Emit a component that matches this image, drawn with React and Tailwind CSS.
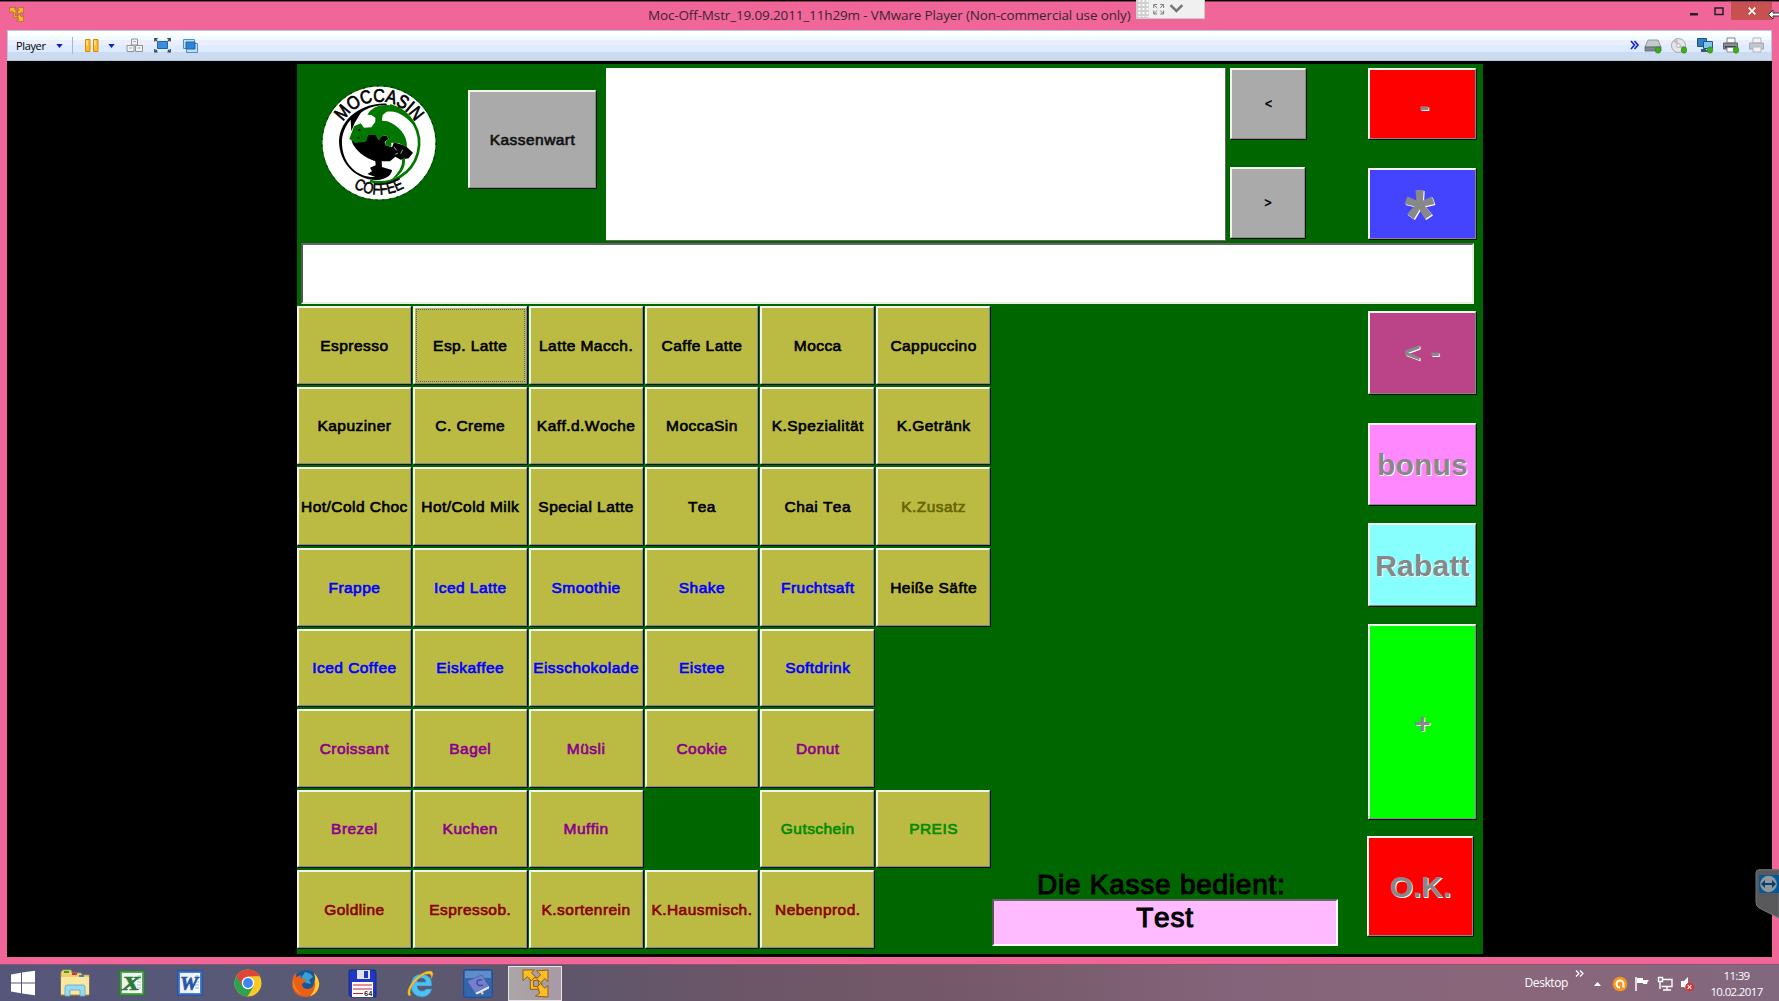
import React from "react";

const K = "text-black";
const B = "text-[#0000ff]";
const P = "text-[#8b008b]";
const G = "text-[#008a00]";
const R = "text-[#8b0000]";

const products = [
  ["Espresso", K], ["Esp. Latte", K, true], ["Latte Macch.", K], ["Caffe Latte", K], ["Mocca", K], ["Cappuccino", K],
  ["Kapuziner", K], ["C. Creme", K], ["Kaff.d.Woche", K], ["MoccaSin", K], ["K.Spezialität", K], ["K.Getränk", K],
  ["Hot/Cold Choc", K], ["Hot/Cold Milk", K], ["Special Latte", K], ["Tea", K], ["Chai Tea", K], ["K.Zusatz", "text-[#666600]"],
  ["Frappe", B], ["Iced Latte", B], ["Smoothie", B], ["Shake", B], ["Fruchtsaft", B], ["Heiße Säfte", K],
  ["Iced Coffee", B], ["Eiskaffee", B], ["Eisschokolade", B], ["Eistee", B], ["Softdrink", B], null,
  ["Croissant", P], ["Bagel", P], ["Müsli", P], ["Cookie", P], ["Donut", P], null,
  ["Brezel", P], ["Kuchen", P], ["Muffin", P], null, ["Gutschein", G], ["PREIS", G],
  ["Goldline", R], ["Espressob.", R], ["K.sortenrein", R], ["K.Hausmisch.", R], ["Nebenprod.", R], null,
];

const bevel =
  "flex items-center justify-center shrink-0 whitespace-nowrap border-t-2 border-l-2 border-r border-b border-t-[#f4f4ee] border-l-[#f4f4ee] border-r-[#888] border-b-[#888] shadow-[1px_1px_0_#111]";

const label =
  "text-[15.5px] tracking-[0.45px] [-webkit-text-stroke:0.65px_currentColor] [font-kerning:none]";

function Button({ className = "", children }) {
  return <button className={`${bevel} ${className}`}>{children}</button>;
}

function Engraved({ className = "", children }) {
  return <span className={`font-bold text-[#888] [text-shadow:1px_1px_0_#fff] ${className}`}>{children}</span>;
}

function Product({ item }) {
  if (!item) return <div />;
  const [text, color, focused] = item;
  return (
    <Button className={`relative min-w-0 bg-[#bbbb44] ${label} ${color}`}>
      {text}
      {focused && <span className="absolute inset-[1px] border border-dotted border-[#5555aa]" />}
    </Button>
  );
}

function Logo() {
  return (
    <svg className="mt-[20px] ml-[23px] h-[118px] w-[118px] shrink-0" viewBox="0 0 118 118">
      <defs>
        <path id="arcTop" d="M17.500 59 A41.500 41.500 0 0 1 100.500 59" />
        <path id="arcBottom" d="M7.500 59 A51.500 51.500 0 0 0 110.500 59" />
      </defs>
      <circle cx="59" cy="59" r="56.500" fill="#fff" />
      <circle cx="59" cy="59" r="57" fill="none" stroke="#001a00" strokeWidth="1" strokeDasharray="2 5" />
      <g transform="translate(-30 -24.300) scale(.33333)">
        <path d="M300 137A117 117 0 0 1 240 364" fill="none" stroke="#007800" strokeWidth="8" />
        <path d="M290 132C225 128 150 170 147 245C148 320 210 368 270 360C300 354 305 340 306 331L276 322L275 305L300 305L316 291L332 300L356 296L369 279L346 258L312 248L306 263L286 256L284 246L296 238L290 227L274 230L266 240L258 226L234 226L226 240L185 244C192 270 225 295 256 305L257 317L240 324L246 335L232 343L256 352C210 355 160 320 156 255C154 225 165 200 182 180L184 215L194 190L212 160C235 142 262 137 290 137Z" fill="#000" />
        <path d="M232 165C245 143 270 132 300 137C330 142 360 165 377 205C355 175 325 150 290 156L278 166L276 183L292 185C325 198 352 225 351 262L325 250L304 249L304 262L286 256L286 246L296 238L290 227L274 230L268 244L257 226L234 226L228 246L196 250L178 238L192 200L212 191L222 204L244 203L256 186L256 174L244 166Z" fill="#007800" />
        <path d="M344 292C350 325 330 350 300 364C325 340 338 320 336 300Z" fill="#007800" />
        <path d="M204 208h7v6h-7zM202 232h6v5h-6z" fill="#001a00" />
        <path d="M312 262l8 10M338 270l-6 12M316 284l8-4" stroke="#fff" strokeWidth="2" />
      </g>
      <text fontFamily="Liberation Sans" fontSize="18.500" textAnchor="middle" stroke="#000" strokeWidth=".7">
        <textPath href="#arcTop" startOffset="50%" textLength="86" lengthAdjust="spacingAndGlyphs">MOCCASIN</textPath>
      </text>
      <text fontFamily="Liberation Sans" fontSize="16" textAnchor="middle" stroke="#000" strokeWidth=".6">
        <textPath href="#arcBottom" startOffset="50%" textLength="53" lengthAdjust="spacingAndGlyphs">COFFEE</textPath>
      </text>
    </svg>
  );
}

function VmIcon({ className }) {
  return (
    <svg className={className} viewBox="0 0 26 30" preserveAspectRatio="none">
      <g fill="#fbbd25" stroke="#7d4d08" strokeWidth=".8" strokeLinejoin="round">
        <path fillRule="evenodd" d="M8 9h11v12H8z M11 12v6h5v-6z" />
        <path d="M1 1h11l-3 3 4 4-4 4-4-4-4 4z" />
        <path d="M14 2l11-1v12l-3-3-4 4-4-4 4-4z" />
        <path d="M15 18l3-3 4 5 3-3v12l-12-1 4-3z" />
      </g>
    </svg>
  );
}

function Caret() {
  return (
    <svg className="h-[4px] w-[7px] shrink-0" viewBox="0 0 8 5">
      <path d="M0 0h8L4 5z" fill="#0a1fd0" />
    </svg>
  );
}

function TitleBar() {
  return (
    <header className="relative flex h-[30px] shrink-0 border-t border-black bg-[#f06698] pl-[9px] shadow-[inset_0_1px_0_#8c3a58]">
      <VmIcon className="mt-[6px] h-[15px] w-[15px]" />
      <h1 className="ml-[624px] mt-[4px] whitespace-nowrap font-['Open_Sans'] text-[13.500px] leading-[21px] tracking-[-0.145px] text-[#3b2430]">
        Moc-Off-Mstr_19.09.2011_11h29m - VMware Player (Non-commercial use only)
      </h1>
      <div className="absolute left-[1136px] top-[-1px] flex h-[19px] w-[69px] items-center border-b border-r border-[#c9c9c9] bg-[#f0f0f0]">
        <svg className="h-[19px] w-[69px]" viewBox="0 0 69 19">
          <path d="M0 0h13v19H0z" fill="#cfcfcf" />
          <path d="M3.500 0v17M7.500 0v17M11.500 0v17" stroke="#fff" strokeWidth="2" strokeDasharray="2 2" />
          <path d="M18 8V4.500h3.500M18.500 5l3 3M24.500 4.500H28V8M27.500 5l-3 3M18 10.500V14h3.500M18.500 13.500l3-3M24.500 14H28v-3.500M27.500 13.500l-3-3" fill="none" stroke="#777" />
          <path d="M35 5l6 6 6-6" fill="none" stroke="#777" strokeWidth="2.500" />
        </svg>
      </div>
      <div className="absolute right-[7px] top-[1px] flex h-[19px] items-start">
        <svg className="h-[19px] w-[41px]" viewBox="0 0 41 19">
          <path d="M0 11h8v2.500H0z" fill="#222" />
          <path d="M25 6h8v6.500h-8z" fill="none" stroke="#222" strokeWidth="1.500" />
        </svg>
        <div className="flex h-[18px] w-[41px] items-center justify-center bg-[#c75050]">
          <svg className="h-[8px] w-[8px]" viewBox="0 0 8 8"><path d="M.7.7l6.600 6.600M7.300.7L.7 7.300" stroke="#fff" strokeWidth="1.700" /></svg>
        </div>
      </div>
      <svg className="absolute right-0 top-[8px] h-[11px] w-[12px]" viewBox="0 0 12 11">
        <path d="M1.500 5.500L6 1v3h7v3H6v3z" fill="#fff" stroke="#333" strokeWidth="1" />
      </svg>
    </header>
  );
}

function GreenDot({ x, y }) {
  return <ellipse cx={x} cy={y} rx="2.800" ry="3.200" fill="#3fae1c" stroke="#267a10" strokeWidth=".5" />;
}

function ToolBar() {
  return (
    <div className="flex h-[31px] shrink-0 items-center border border-[#b4c8e6] bg-[linear-gradient(to_bottom,#fff_0_5px,#f0fdff_5px_9px,#ededfc_9px_14px,#dcecfe_14px_21px,#cbdaf8_21px_23px,#ccdcec_23px)] pl-[8px] pr-[5px]">
      <span className="w-[40px] whitespace-nowrap font-['Open_Sans'] text-[11px] leading-[16px] tracking-[-0.350px] text-black">Player</span>
      <Caret />
      <div className="ml-[9px] h-[17px] w-px bg-[#9fb8d8]" />
      <svg className="ml-[12px] mr-[9px] h-[13px] w-[14px]" viewBox="0 0 14 13">
        <path d="M.5.5h4.500v12H.5zM8.500.5H13v12H8.500z" fill="#fbc02a" stroke="#d98a00" />
        <path d="M2 1.500v5M10 1.500v5" stroke="#ffe79a" strokeWidth="1.500" />
      </svg>
      <Caret />
      <svg className="ml-[11px] h-[15px] w-[18px]" viewBox="0 0 18 15">
        <path d="M5.500 1h6v6h-6zM1 7.500h7v6H1zM9.500 7.500h7v6h-7z" fill="#f2f2f2" stroke="#8e949c" />
        <path d="M3 10h3M11.500 10h3M7 3.500h3" stroke="#aab" />
      </svg>
      <svg className="ml-[10px] h-[15px] w-[17px]" viewBox="0 0 17 15">
        <path d="M3.500 3.500h10v7h-10z" fill="#3b8de0" stroke="#2563a8" />
        <path d="M.7 3.500V.7h3M13.300.7h3v2.800M.7 11v3h3M13.300 14h3v-3M1 1l2 2M16 1l-2 2M1 14l2-2M16 14l-2-2" fill="none" stroke="#2c4460" strokeWidth="1.200" />
      </svg>
      <svg className="ml-[12px] h-[14px] w-[15px]" viewBox="0 0 15 14">
        <path d="M.5.5h11v9H.5zM3.500 4.500h11v9h-11z" fill="#c8def5" stroke="#4a8fd0" />
        <path d="M3 3h9v7H3z" fill="#2f83d8" stroke="#1d63b0" />
      </svg>
      <div className="grow" />
      <svg className="h-[19px] w-[136px]" viewBox="0 0 136 19">
        <path d="M1 5l3.500 4L1 13M4.500 5L8 9l-3.500 4" fill="none" stroke="#0b22e0" strokeWidth="1.600" />
        <path d="M18 4h10l3 7H15z" fill="#c3cbd0" stroke="#7c858c" strokeWidth=".8" />
        <path d="M15 11h16v4H15z" fill="#7d888e" stroke="#5d666c" strokeWidth=".8" />
        <GreenDot x="28" y="14" />
        <circle cx="48.500" cy="9.500" r="7" fill="#e5e5e9" stroke="#a4a4a8" />
        <path d="M48.500 9.500L43 5a7 7 0 0 1 4-2.500zM48.500 9.500l5 5a7 7 0 0 0 2-4z" fill="#bdbdc5" />
        <circle cx="48.500" cy="9.500" r="1.800" fill="#fff" stroke="#aaa" />
        <GreenDot x="54" y="14" />
        <path d="M67.500 2.500h9v8h-9z" fill="#327fc5" stroke="#244d80" />
        <path d="M71 13h5v3h-5z" fill="#385777" />
        <path d="M73.500 5.500h9v7h-9z" fill="#7fc6f3" stroke="#245489" />
        <path d="M76 15h6" stroke="#567" strokeWidth="2" />
        <GreenDot x="80" y="14" />
        <path d="M97 2h8v5h-8z" fill="#fff" stroke="#7c8088" />
        <path d="M93.500 7h14v6h-14z" fill="#8a8c98" stroke="#5c5f6a" />
        <path d="M95 10h11v2H95z" fill="#44464f" />
        <path d="M97 11.500h8v4.500h-8z" fill="#fff" stroke="#8a8d95" />
        <GreenDot x="106" y="14" />
        <path d="M123 2h8v5h-8z" fill="#f3f3f5" stroke="#b4b7bf" />
        <path d="M119.500 7h14v6h-14z" fill="#c3c6d0" stroke="#a5a8b4" />
        <path d="M123 11h8v5h-8z" fill="#f3f3f5" stroke="#b4b7bf" />
      </svg>
    </div>
  );
}

function RegisterTop() {
  return (
    <div className="flex h-[177px] shrink-0 items-start">
      <Logo />
      <Button className={`ml-[30px] mt-[26px] h-[98px] w-[128px] bg-[#aaaaaa] text-[#111] ${label}`}>Kassenwart</Button>
      <div className="ml-[10px] mt-[4px] h-[173px] w-[620px] shrink-0 border-b border-r border-[#666] bg-white" />
      <div className="ml-[4px] mt-[4px] flex flex-col gap-[28px]">
        <Button className="h-[71px] w-[76px] bg-[#aaaaaa] text-[12px] [-webkit-text-stroke:0.5px_currentColor]">&lt;</Button>
        <Button className="h-[71px] w-[75px] bg-[#aaaaaa] text-[12px] [-webkit-text-stroke:0.5px_currentColor]">&gt;</Button>
      </div>
      <div className="ml-[62px] mt-[4px] flex flex-col gap-[29px]">
        <Button className="h-[71px] w-[108px] bg-[#ff0000]">
          <Engraved className="pt-[4px] pl-[4px] text-[30px] leading-none">-</Engraved>
        </Button>
        <Button className="h-[71px] w-[108px] bg-[#4444ff]">
          <Engraved className="mt-[26px] mr-[6px] text-[77px] leading-[77px]">*</Engraved>
        </Button>
      </div>
    </div>
  );
}

function ActionColumn() {
  return (
    <div className="flex w-[109px] shrink-0 flex-col pt-[7px]">
      <Button className="h-[83px] w-[108px] bg-[#bb4488]"><Engraved className="text-[28px] tracking-[1px]">&lt; -</Engraved></Button>
      <Button className="mt-[29px] h-[82px] w-[108px] bg-[#ff88ff]"><Engraved className="text-[30px] tracking-[0.200px]">bonus</Engraved></Button>
      <Button className="mt-[18px] h-[83px] w-[108px] bg-[#88ffff]"><Engraved className="text-[30px] tracking-[0.200px]">Rabatt</Engraved></Button>
      <Button className="mt-[18px] h-[195px] w-[108px] bg-[#00ff00]"><Engraved className="mt-[4px] text-[28px]">+</Engraved></Button>
      <Button className="ml-[-1px] mt-[17px] h-[100px] w-[106px] bg-[#ff0000]"><Engraved className="text-[30px]">O.K.</Engraved></Button>
    </div>
  );
}

const caption = "text-[28px] [-webkit-text-stroke:1.1px_currentColor] [font-kerning:none] text-black";

function Register() {
  return (
    <main className="flex h-[890px] w-[1186px] shrink-0 flex-col bg-[#006600] font-['Liberation_Sans',sans-serif]">
      <RegisterTop />
      <div className="ml-[4px] mt-[2px] h-[61px] w-[1173px] shrink-0 border-2 border-b-[#eeeedd] border-l-[#555] border-r-[#eeeedd] border-t-[#666] bg-white" />
      <div className="flex min-h-0 grow">
        <div className="mt-[2px] grid h-[642px] w-[693px] shrink-0 grid-cols-6 grid-rows-8 gap-x-[2px] gap-y-[3px]">
          {products.map((item, i) => <Product key={i} item={item} />)}
        </div>
        <div className="flex w-[378px] flex-col justify-end pb-[8px] pl-[2px]">
          <p className={`ml-[45px] whitespace-nowrap leading-[28px] tracking-[0.75px] ${caption}`}>Die Kasse bedient:</p>
          <div className={`h-[47px] w-[346px] border-2 border-b-white border-l-[#555] border-r-white border-t-[#666] bg-[#ffbbff] text-center leading-[34px] tracking-[0.8px] ${caption}`}>Test</div>
        </div>
        <ActionColumn />
      </div>
    </main>
  );
}

function StartIcon() {
  return (
    <svg className="h-[26px] w-[26px]" viewBox="0 0 26 26">
      <path d="M1 4.500l10-1.700v9.700H1zM12 2.600L25 .8v11.700H12zM1 13.500h10v9.700L1 21.500zM12 13.500h13v11.700l-13-1.800z" fill="#fff" />
    </svg>
  );
}
function FolderIcon() {
  return (
    <svg className="h-[28px] w-[30px]" viewBox="0 0 30 28">
      <path d="M1 3l2-2h8l1 3h9l1 2h7v20H1z" fill="#f0cf6c" stroke="#c89c3c" strokeWidth=".7" />
      <path d="M4 2h5v2H4z" fill="#2ca52c" /><path d="M12 4h5v2h-5z" fill="#d33" /><path d="M19 6h5v2h-5z" fill="#3a80d0" />
      <path d="M1 8h28v17H1z" fill="#fbe7a0" />
      <path d="M5 27V18q0-2 2-2h16q2 0 2 2v9h-5v-6H10v6z" fill="#9ad9f2" stroke="#55a8cf" strokeWidth=".8" />
    </svg>
  );
}
function OfficeIcon({ letter, edge, fill }) {
  return (
    <svg className="h-[26px] w-[26px]" viewBox="0 0 26 26">
      <path d="M.7.700h24.600v24.600H.7z" fill={fill} stroke={edge} strokeWidth="1.400" />
      <path d="M3 3h20v20H3z" fill="#eef3f2" />
      <path d="M17 3h6v20h-6z" fill="#fff" /><path d="M18 6h4M18 9h4M18 12h4M18 15h4M18 18h4" stroke={fill} strokeWidth=".6" />
      <text x="12" y="20" textAnchor="middle" fontFamily="Liberation Serif" fontStyle="italic" fontWeight="bold" fontSize="19" fill={edge} stroke={edge} strokeWidth=".7" textLength="18" lengthAdjust="spacingAndGlyphs">{letter}</text>
    </svg>
  );
}
function ChromeIcon() {
  return (
    <svg className="h-[28px] w-[28px]" viewBox="0 0 28 28">
      <circle cx="14" cy="14" r="13.500" fill="#fbc926" />
      <path d="M14 14L2.300 7.200A13.500 13.500 0 0 0 13.500 27.500l6-10z" fill="#2da350" />
      <path d="M2.300 7.200A13.500 13.500 0 0 1 25.700 7.200L14 7.500l-5.500 9z" fill="#dc4537" />
      <circle cx="14" cy="14" r="6.200" fill="#fff" /><circle cx="14" cy="14" r="4.900" fill="#4384f3" />
    </svg>
  );
}
function FirefoxIcon() {
  return (
    <svg className="h-[29px] w-[29px]" viewBox="0 0 29 29">
      <circle cx="15.500" cy="13.500" r="12.500" fill="#1c5596" />
      <path d="M14 3q6 1 8 5l-4 3 2 4-5-1-5-5z" fill="#39a0cd" />
      <path d="M23 4q6 6 5 13-2 11-14 11Q2 27 1 15 1 7 5 4v4l5-2q-1 3 1 4 4 0 4 2l-4 3q0 5 6 5 6-1 6-7 2-3 0-9z" fill="#e66018" />
      <path d="M23 4q6 6 5 13-2 8-9 10 6-6 5-14 1-5-1-9z" fill="#ffcd38" />
      <path d="M3 10q-1 11 9 15-7-1-10-8z" fill="#f58b22" />
    </svg>
  );
}
function DiskIcon() {
  return (
    <svg className="h-[29px] w-[29px]" viewBox="0 0 29 29">
      <path d="M1 2q0-1 1-1h25l1 2v25H3l-2-2z" fill="#2036c4" stroke="#14217e" strokeWidth=".8" />
      <path d="M9 1h13v9H9z" fill="#e2e2e6" /><path d="M16 2h4v7h-4z" fill="#2036c4" />
      <path d="M4 13h21v15H4z" fill="#fff" />
      <path d="M5 16h19M5 20h19M5 24.500h10" stroke="#c8202c" strokeWidth="1.200" />
      <text x="16" y="27" fontFamily="Liberation Mono" fontSize="7" fontWeight="bold" fill="#222">64</text>
    </svg>
  );
}
function IeIcon() {
  return (
    <svg className="h-[29px] w-[29px]" viewBox="0 0 29 29">
      <path d="M26 17H11q1 5 5 5 3 0 4-2h6q-3 8-10 8Q5 27 5 16 6 5 16 5q10 1 10 12zM11 13h9q-1-4-4-4-4 0-5 4z" fill="#4fc0f0" stroke="#2588c4" strokeWidth=".6" />
      <path d="M3 27Q-1 22 8 11 18 1 25 2q4 2 0 8 1-5-2-5Q17 4 9 13 2 22 5 26z" fill="#f6c52c" stroke="#c38a10" strokeWidth=".4" />
    </svg>
  );
}
function BookIcon() {
  return (
    <svg className="h-[29px] w-[30px]" viewBox="0 0 30 29">
      <rect x=".7" y=".7" width="28.600" height="27.600" rx="2" fill="#3267ae" stroke="#1c4a94" />
      <path d="M2 2h26v7H2z" fill="#5f8dc9" />
      <path d="M4 12l15-6 7 11-14 7z" fill="#7480cc" stroke="#4050a0" strokeWidth=".6" />
      <path d="M19 11q-5-1-5 3 1 4 6 2" fill="none" stroke="#3d4fa6" strokeWidth="1.600" />
      <path d="M12 24l14-7v2.500l-12 6z" fill="#e8eaf4" />
      <path d="M17 22l2 4 2-2z" fill="#f1d9a0" />
    </svg>
  );
}

function TaskBar() {
  return (
    <footer className="flex h-[36px] shrink-0 items-center bg-[linear-gradient(to_right,#55567a_0,#595a74_18%,#5f566c_32%,#6c5667_42%,#76596a_55%,#84647a_70%,#8a667a_85%,#81687f_100%)] font-['Open_Sans'] text-white">
      <div className="flex h-full items-center pl-[10px]">
        <StartIcon />
        <div className="ml-[24px]"><FolderIcon /></div>
        <div className="ml-[29px]"><OfficeIcon letter="X" edge="#2c7a34" fill="#5ba65c" /></div>
        <div className="ml-[32px]"><OfficeIcon letter="W" edge="#2756a8" fill="#4b7fd0" /></div>
        <div className="ml-[31px]"><ChromeIcon /></div>
        <div className="ml-[29px]"><FirefoxIcon /></div>
        <div className="ml-[28px]"><DiskIcon /></div>
        <div className="ml-[29px]"><IeIcon /></div>
        <div className="ml-[28px]"><BookIcon /></div>
        <div className="ml-[15px] flex h-[35px] w-[54px] items-center justify-center border border-[#e8e4ea] bg-[linear-gradient(to_right,#aaa6a6,#aa98a6)]">
          <VmIcon className="h-[29px] w-[27px]" />
        </div>
      </div>
      <div className="grow" />
      <span className="text-[12px] tracking-[-0.400px]">Desktop</span>
      <svg className="ml-[7px] mb-[20px] h-[7px] w-[9px]" viewBox="0 0 9 7"><path d="M1 .5l3 3-3 3M5 .5l3 3-3 3" fill="none" stroke="#fff" strokeWidth="1.200" /></svg>
      <svg className="ml-[10px] mt-[2px] h-[20px] w-[104px]" viewBox="0 0 104 20">
        <path d="M0 12h7l-3.500-4z" fill="#fff" />
        <circle cx="26" cy="10" r="7.300" fill="#f8961c" />
        <path d="M29.500 13.500V10a3.500 3.500 0 1 0-3.500 3.500" fill="none" stroke="#fff" strokeWidth="2" />
        <path d="M42 3v14" stroke="#fff" strokeWidth="1.500" /><path d="M43 4h6v2h6q-2 2-2 4h-4V9h-6z" fill="#fff" />
        <path d="M68 5.500h10v7H67.500M73 13v3M69 16h8M64.500 3.500h4v4h-4zM66 8v7" fill="none" stroke="#fff" strokeWidth="1.400" />
        <path d="M87 7h3l4-4v14l-4-4h-3z" fill="#fff" />
        <circle cx="95.500" cy="13" r="4.300" fill="#dc2f2f" /><path d="M93.700 11.200l3.600 3.600M97.300 11.200l-3.600 3.600" stroke="#fff" strokeWidth="1.200" />
      </svg>
      <div className="ml-[8px] mr-[12px] mt-[2px] w-[61px] whitespace-nowrap text-center text-[11.500px] leading-[16px] tracking-[-0.650px]">
        <div>11:39</div>
        <div>10.02.2017</div>
      </div>
    </footer>
  );
}

export default function App() {
  return (
    <div className="relative flex h-[1001px] w-[1779px] flex-col overflow-hidden bg-[#f06698]">
      <TitleBar />
      <div className="mx-[7px] flex h-[927px] shrink-0 flex-col bg-black">
        <ToolBar />
        <div className="flex grow pl-[290px] pt-[3px]">
          <Register />
        </div>
      </div>
      <div className="h-[8px] shrink-0 border-b border-[#99506f]" />
      <TaskBar />
      <svg className="absolute right-0 top-[869px] h-[50px] w-[24px]" viewBox="0 0 24 50">
        <path d="M24 .7H4Q1 .7 1 4v29q0 4 3 6l20 10z" fill="#59595b" stroke="#747478" />
        <path d="M4 6h20v18H4z" fill="#075896" />
        <circle cx="13.500" cy="15" r="8.300" fill="#8e989e" />
        <path d="M6 15l4-4v3h7v-3l4 4-4 4v-3h-7v3z" fill="#073f70" />
      </svg>
    </div>
  );
}
